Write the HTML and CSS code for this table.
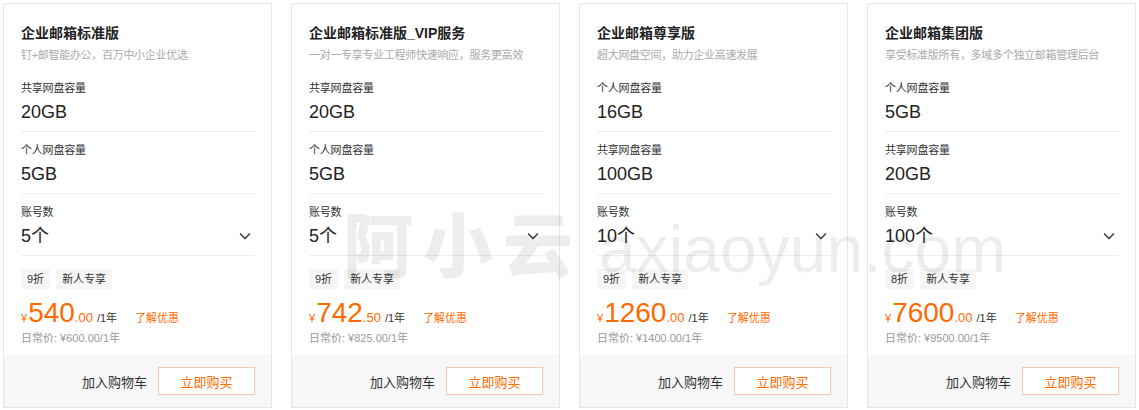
FILE: index.html
```html
<!DOCTYPE html>
<html lang="zh">
<head>
<meta charset="utf-8">
<title>企业邮箱</title>
<link rel="stylesheet" href="styles.css">
</head>
<body>
<div class="page">
  <div class="cards">
    <div class="card">
      <div class="body">
        <div class="title">企业邮箱标准版</div>
        <div class="sub">钉+邮智能办公，百万中小企业优选</div>
        <div class="spec"><div class="label">共享网盘容量</div><div class="value">20GB</div></div>
        <div class="spec"><div class="label">个人网盘容量</div><div class="value">5GB</div></div>
        <div class="spec"><div class="label">账号数</div><div class="value select"><span>5个</span><svg class="chev" width="12" height="8" viewBox="0 0 12 8"><path d="M1 1.5 L6 6.5 L11 1.5" fill="none" stroke="#333" stroke-width="1.3"/></svg></div></div>
        <div class="tags"><span class="tag">9折</span><span class="tag">新人专享</span></div>
        <div class="price"><span class="cur">¥</span><span class="int">540</span><span class="dec">.00</span><span class="per">/1年</span><a class="promo">了解优惠</a></div>
        <div class="orig">日常价: ¥600.00/1年</div>
      </div>
      <div class="foot"><span class="cart">加入购物车</span><button class="buy">立即购买</button></div>
    </div>
    <div class="card">
      <div class="body">
        <div class="title">企业邮箱标准版_VIP服务</div>
        <div class="sub">一对一专享专业工程师快速响应，服务更高效</div>
        <div class="spec"><div class="label">共享网盘容量</div><div class="value">20GB</div></div>
        <div class="spec"><div class="label">个人网盘容量</div><div class="value">5GB</div></div>
        <div class="spec"><div class="label">账号数</div><div class="value select"><span>5个</span><svg class="chev" width="12" height="8" viewBox="0 0 12 8"><path d="M1 1.5 L6 6.5 L11 1.5" fill="none" stroke="#333" stroke-width="1.3"/></svg></div></div>
        <div class="tags"><span class="tag">9折</span><span class="tag">新人专享</span></div>
        <div class="price"><span class="cur">¥</span><span class="int">742</span><span class="dec">.50</span><span class="per">/1年</span><a class="promo">了解优惠</a></div>
        <div class="orig">日常价: ¥825.00/1年</div>
      </div>
      <div class="foot"><span class="cart">加入购物车</span><button class="buy">立即购买</button></div>
    </div>
    <div class="card">
      <div class="body">
        <div class="title">企业邮箱尊享版</div>
        <div class="sub">超大网盘空间，助力企业高速发展</div>
        <div class="spec"><div class="label">个人网盘容量</div><div class="value">16GB</div></div>
        <div class="spec"><div class="label">共享网盘容量</div><div class="value">100GB</div></div>
        <div class="spec"><div class="label">账号数</div><div class="value select"><span>10个</span><svg class="chev" width="12" height="8" viewBox="0 0 12 8"><path d="M1 1.5 L6 6.5 L11 1.5" fill="none" stroke="#333" stroke-width="1.3"/></svg></div></div>
        <div class="tags"><span class="tag">9折</span><span class="tag">新人专享</span></div>
        <div class="price"><span class="cur">¥</span><span class="int">1260</span><span class="dec">.00</span><span class="per">/1年</span><a class="promo">了解优惠</a></div>
        <div class="orig">日常价: ¥1400.00/1年</div>
      </div>
      <div class="foot"><span class="cart">加入购物车</span><button class="buy">立即购买</button></div>
    </div>
    <div class="card">
      <div class="body">
        <div class="title">企业邮箱集团版</div>
        <div class="sub">享受标准版所有，多域多个独立邮箱管理后台</div>
        <div class="spec"><div class="label">个人网盘容量</div><div class="value">5GB</div></div>
        <div class="spec"><div class="label">共享网盘容量</div><div class="value">20GB</div></div>
        <div class="spec"><div class="label">账号数</div><div class="value select"><span>100个</span><svg class="chev" width="12" height="8" viewBox="0 0 12 8"><path d="M1 1.5 L6 6.5 L11 1.5" fill="none" stroke="#333" stroke-width="1.3"/></svg></div></div>
        <div class="tags"><span class="tag">8折</span><span class="tag">新人专享</span></div>
        <div class="price"><span class="cur">¥</span><span class="int">7600</span><span class="dec">.00</span><span class="per">/1年</span><a class="promo">了解优惠</a></div>
        <div class="orig">日常价: ¥9500.00/1年</div>
      </div>
      <div class="foot"><span class="cart">加入购物车</span><button class="buy">立即购买</button></div>
    </div>
  </div>
  <div class="watermark"><span class="wm-cn">阿小云</span><span class="wm-en">axiaoyun.com</span></div>
</div>
</body>
</html>
```
FILE: styles.css
```css
* { box-sizing: border-box; }
html, body { margin: 0; padding: 0; background: #fff; }
body {
  font-family: "Liberation Sans", "Noto Sans CJK SC", sans-serif;
  color: #333;
}
.page { position: relative; width: 1139px; height: 410px; overflow: hidden; }
.cards {
  display: grid;
  grid-template-columns: repeat(4, 269px);
  column-gap: 19px;
  padding: 3px 0 0 3px;
}
.card {
  height: 405px;
  border: 1px solid #e6e6e6;
  display: flex;
  flex-direction: column;
  background: #fff;
}
.body { flex: 1; padding: 17px 16px 0 17px; }
.title { font-size: 14px; line-height: 24px; font-weight: 700; color: #222; white-space: nowrap; }
.sub { font-size: 11px; line-height: 18px; color: #aaa; margin-top: 1px; white-space: nowrap; letter-spacing: -0.3px; }
.sub + .spec { margin-top: 6px; }
.spec { padding: 9px 0 7px; border-bottom: 1px solid #eeeeee; }
.label { font-size: 11px; line-height: 18px; color: #333; letter-spacing: -0.2px; }
.value { font-size: 18px; line-height: 24px; margin-top: 3px; color: #222; }
.select { display: flex; align-items: center; justify-content: space-between; padding-right: 4px; }
.chev { display: block; }
.tags { display: flex; gap: 6px; margin-top: 13px; }
.tag {
  font-size: 11px; line-height: 20px; height: 20px;
  padding: 0 6px; background: #f6f6f6; color: #333;
}
.price {
  display: flex; align-items: baseline; margin-top: 8px; height: 31px;
  color: #ff6a00; white-space: nowrap;
}
.cur { font-size: 11px; margin-right: 1px; }
.int { font-size: 28px; line-height: 31px; }
.dec { font-size: 13px; }
.per { font-size: 11px; color: #333; margin-left: 4px; }
.promo { font-size: 11px; color: #ff6a00; margin-left: 18px; }
.orig { font-size: 11px; line-height: 18px; color: #999; margin-top: 1px; }
.foot {
  height: 52px; background: #f7f7f7;
  display: flex; align-items: center; justify-content: flex-end;
  padding-right: 16px; gap: 11px;
}
.cart { font-size: 13px; color: #333; }
.buy {
  width: 97px; height: 28px; border: 1px solid #f5c8ad; background: #fff;
  color: #ff6a00; font-size: 13px; font-family: inherit; padding: 0;
}
.watermark {
  position: absolute; left: 343px; top: 200px;
  display: flex; align-items: baseline; gap: 16px;
  color: rgba(0, 0, 0, 0.07); pointer-events: none; white-space: nowrap;
}
.wm-cn { font-family: "Noto Sans CJK SC", sans-serif; font-weight: 900; font-size: 70px; letter-spacing: 10px; line-height: 1.2; }
.wm-en { font-family: "Liberation Sans", sans-serif; font-size: 66px; line-height: 1.2; }
```
